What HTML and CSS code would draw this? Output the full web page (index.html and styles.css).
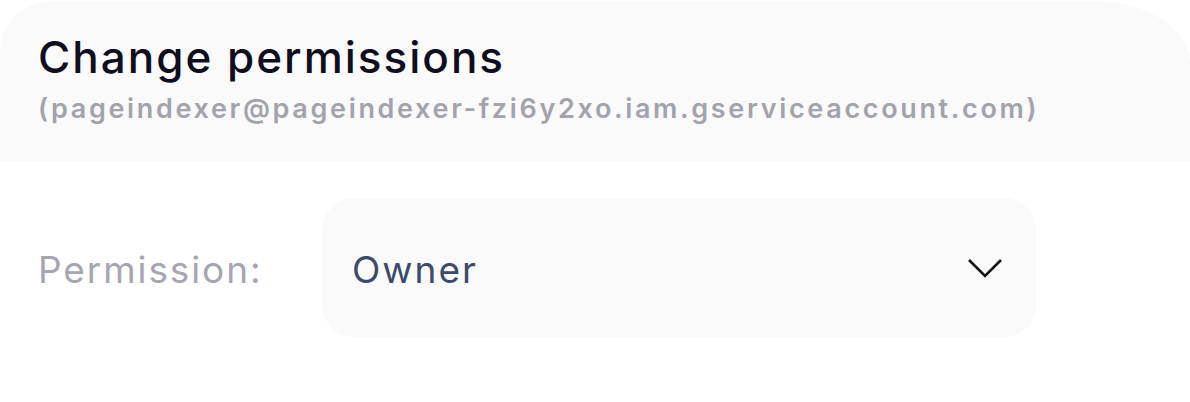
FILE: index.html
```html
<!DOCTYPE html>
<html>
<head>
<meta charset="utf-8">
<link rel="stylesheet" href="styles.css">
</head>
<body>
<div class="dialog">
  <header class="head">
    <h1 class="title">Change permissions</h1>
    <p class="sub">(pageindexer@pageindexer-fzi6y2xo.iam.gserviceaccount.com)</p>
  </header>
  <div class="row">
    <span class="label">Permission:</span>
    <div class="select">
      <span class="value">Owner</span>
      <svg class="chev" width="36" height="20" viewBox="0 0 36 20"><path d="M2 2 L18 18 L34 2" fill="none" stroke="#111" stroke-width="2.6"/></svg>
    </div>
  </div>
</div>
</body>
</html>
```
FILE: styles.css
```css
html, body { margin: 0; padding: 0; background: #fff; }
body { width: 1190px; height: 402px; overflow: hidden; }
.dialog { padding-top: 2px; }
.head {
  background: #fafafa;
  height: 159px;
  box-sizing: border-box;
  padding: 27px 0 0 38px;
  border-radius: 50px 90px 0 0 / 50px 64px 0 0;
}
.title {
  margin: 0;
  font-family: Inter, sans-serif;
  font-weight: 500;
  font-size: 44px;
  line-height: 56px;
  color: #0e0e1e;
  letter-spacing: 2px;
}
.sub {
  margin: 6px 0 0 0;
  font-family: Inter, sans-serif;
  font-weight: 600;
  font-size: 27px;
  line-height: 36px;
  color: #a3a3ab;
  letter-spacing: 2.65px;
}
.row {
  display: flex;
  align-items: center;
  padding: 37px 0 0 38px;
}
.label {
  width: 284px;
  padding-top: 3px;
  font-family: Inter, sans-serif;
  font-size: 37px;
  color: #a6a6b0;
  letter-spacing: 1.9px;
}
.select {
  width: 714px;
  height: 139px;
  box-sizing: border-box;
  background: #fafafa;
  border-radius: 32px;
  display: flex;
  align-items: center;
  justify-content: space-between;
  padding: 0 33px 0 30px;
}
.value {
  padding-top: 3px;
  font-family: Inter, sans-serif;
  font-size: 37px;
  color: #3d4a6a;
  letter-spacing: 2px;
}
.chev { display: block; }
```
